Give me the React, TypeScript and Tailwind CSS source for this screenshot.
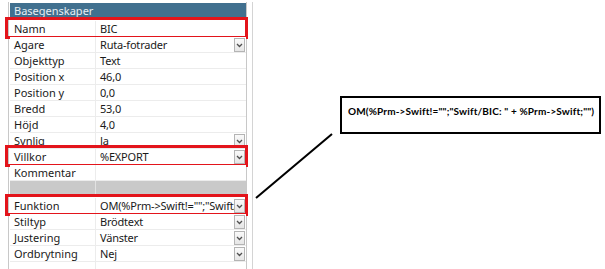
import React from 'react';

type Row = { label: string; value: string; drop?: boolean; red?: boolean };

const rows: Row[] = [
  { label: 'Namn', value: 'BIC', red: true },
  { label: 'Agare', value: 'Ruta-fotrader', drop: true },
  { label: 'Objekttyp', value: 'Text' },
  { label: 'Position x', value: '46,0' },
  { label: 'Position y', value: '0,0' },
  { label: 'Bredd', value: '53,0' },
  { label: 'Höjd', value: '4,0' },
  { label: 'Synlig', value: 'Ja', drop: true },
  { label: 'Villkor', value: '%EXPORT', drop: true, red: true },
  { label: 'Kommentar', value: '' },
];

const rows2: Row[] = [
  { label: 'Funktion', value: 'OM(%Prm->Swift!="";"Swift/BIC: " + %Prm->Swift;"")', drop: true, red: true },
  { label: 'Stiltyp', value: 'Brödtext', drop: true },
  { label: 'Justering', value: 'Vänster', drop: true },
  { label: 'Ordbrytning', value: 'Nej', drop: true },
  { label: '', value: '' },
];

const DropButton = () => (
  <div className="absolute right-[1px] top-[1px] w-[11px] h-[14px] border border-[#b4b4b4] bg-gradient-to-b from-[#fafafa] to-[#e6e6e6] flex items-center justify-center">
    <svg width="7" height="5" viewBox="0 0 7 5">
      <path d="M1 1 L3.5 3.5 L6 1" stroke="#505050" strokeWidth="1.3" fill="none" />
    </svg>
  </div>
);

const PropRow = ({ row }: { row: Row }) => (
  <div className="relative flex h-4 border-b border-[#ececec] bg-white">
    <div className="w-[86px] shrink-0 border-r border-[#ececec] pl-[4px] leading-[15px] whitespace-nowrap overflow-hidden">
      {row.label}
    </div>
    <div className="relative flex-1 min-w-0 pl-[4px] leading-[15px] whitespace-nowrap overflow-hidden tracking-[-0.2px]">
      {row.value}
    </div>
    {row.drop && <DropButton />}
    {row.red && (
      <div className="absolute left-[-5px] right-[-2px] top-[-4px] bottom-[-3px] border-[3px] border-[#e3141b] pointer-events-none" />
    )}
  </div>
);

export default function App() {
  return (
    <div
      className="relative w-[605px] h-[269px] overflow-hidden bg-white text-[11px] text-[#1a1a1a] flex"
      style={{ fontFamily: '"Noto Sans", "Open Sans", sans-serif' }}
    >
      <div className="ml-[8px] mt-[2px] w-[245px] shrink-0 flex border-r border-[#d4d4d4]">
        <div className="w-[239px] border-l border-r border-[#c8c8c8] pl-[1px] pt-[1px]">
          <div className="h-[16px] bg-[#41708f] text-[#e8eef3] pl-[4px] leading-[16px]">Basegenskaper</div>
          <div className="h-[2px] bg-white" />
          {rows.map((r) => (
            <PropRow key={r.label} row={r} />
          ))}
          <div className="flex h-[17px] bg-[#c9c9c9] border-b border-white">
            <div className="w-[86px] border-r border-[#e2e2e2]" />
          </div>
          {rows2.map((r, i) => (
            <PropRow key={i} row={r} />
          ))}
        </div>
      </div>

      <div className="relative flex-1">
        <svg className="absolute left-0 top-0" width="352" height="269">
          <line x1="3" y1="198" x2="79" y2="134" stroke="#000" strokeWidth="2" />
        </svg>
        <div
          className="absolute left-[87px] top-[96px] w-[261px] h-[38px] border-2 border-black bg-white pl-[6px] pt-[6px] text-[10px] tracking-[0.15px] font-bold text-black whitespace-nowrap"
          style={{ fontFamily: 'Lato, "Liberation Sans", sans-serif' }}
        >
          OM(%Prm-&gt;Swift!="";"Swift/BIC: " + %Prm-&gt;Swift;"")
        </div>
      </div>
    </div>
  );
}
